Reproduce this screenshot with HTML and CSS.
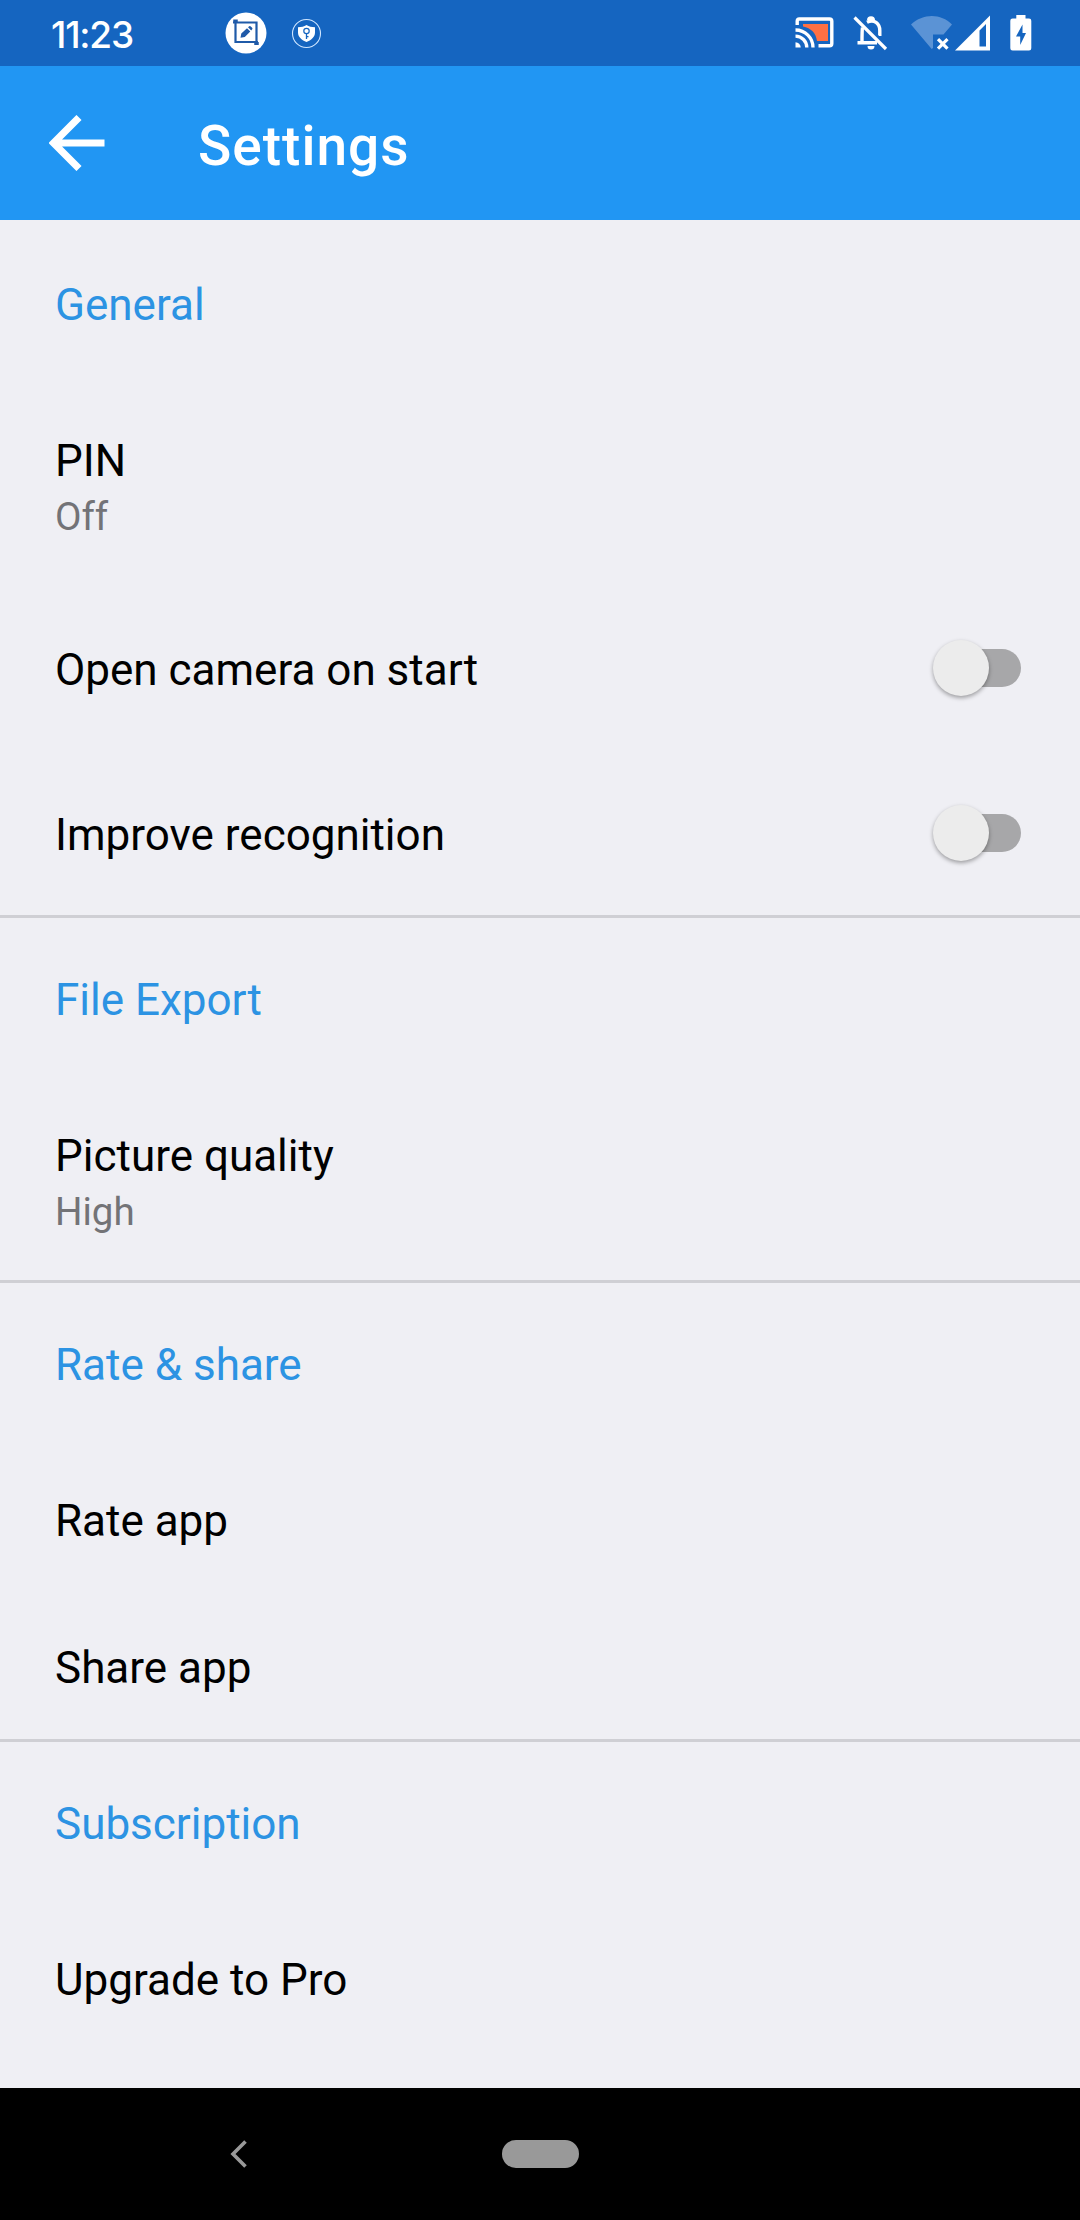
FILE: index.html
```
<!DOCTYPE html>
<html lang="en">
<head>
  <meta charset="UTF-8">
  <meta name="viewport" content="width=device-width, initial-scale=1.0">
  <title>Settings</title>
  <link rel="stylesheet" href="styles.css">
</head>
<body>
  <div class="statusbar">
    <span class="time">11:23</span>
    <svg class="icon-crop" width="42" height="42" viewBox="0 0 42 42">
      <circle cx="21" cy="21" r="20.500" fill="#fff"/>
      <path d="M8 10.500H31.500V31.500M10.500 8V30H33" fill="none" stroke="#1f5aa8" stroke-width="2.200"/>
      <path d="M10.500 7.500V11M31.500 30V33" stroke="#1f5aa8" stroke-width="4.500"/>
      <path d="M15.500 25.800l.8-4.200 5.700-5.300 3.300 3.300-5.500 5.400zM23 15.300l1.200-1.100q.8-.6 1.600.2l1.300 1.300q.8.800.1 1.600L26.200 18.500z" fill="#1f5aa8"/>
    </svg>
    <svg class="icon-shield" width="31" height="31" viewBox="0 0 31 31">
      <circle cx="15.500" cy="15.500" r="14" fill="none" stroke="#cfe6ff" stroke-width="1.100"/>
      <path d="M15.500 7c2.500 1.800 5 2.200 8.500 2.200v5.300c0 4.500-4 7.800-8.500 9.500-4.500-1.700-8.500-5-8.500-9.500V9.200c3.500 0 6-.4 8.500-2.200z" fill="#fff"/>
      <circle cx="15.500" cy="13" r="2.700" fill="none" stroke="#1565c0" stroke-width="1.200"/>
      <path d="M15.500 15.700v5.300M15.500 18.700h2" fill="none" stroke="#1565c0" stroke-width="1.300"/>
    </svg>
    <div class="system">
      <svg class="icon-cast" width="40" height="34" viewBox="0 0 40 34">
        <path d="M8 8H33V25H22C21 17 16 12 8 10.500z" fill="#ff7043"/>
        <path d="M2.200 9V5Q2.200 3 4.200 3H34.500Q36.800 3 36.800 5.300V27.500Q36.800 29.800 34.500 29.800H23.500" fill="none" stroke="#fff" stroke-width="3.400"/>
        <path d="M.5 14A17.500 17.500 0 0 1 18 31.500M.5 20.200A11.300 11.300 0 0 1 11.800 31.500" fill="none" stroke="#fff" stroke-width="3.300"/>
        <path d="M.5 26.300A5.200 5.200 0 0 1 5.700 31.500H.5z" fill="#fff"/>
      </svg>
      <svg class="icon-bell" width="36" height="36" viewBox="0 0 36 36">
        <path d="M15 5.200a3 3 0 0 1 6 0" fill="#fff" stroke="#fff" stroke-width="2"/>
        <path d="M14 7.300C21 3.500 26.800 8.500 26.800 15.500V21M9.500 12.500C9 15 9 18 9 27M4.500 27.700H24" fill="none" stroke="#fff" stroke-width="3.400"/>
        <path d="M14.500 31h7a3.500 3.500 0 0 1-7 0z" fill="#fff"/>
        <path d="M3.500 0.500L35 32" stroke="#1565c0" stroke-width="3"/>
        <path d="M1.500 2.500L33 34" stroke="#fff" stroke-width="3.200"/>
      </svg>
      <svg class="icon-wifi" width="42" height="36" viewBox="0 0 42 36">
        <path d="M20.700 34L0 9.500C12-2 30-2 41 9.500L32.500 19.500H22V33z" fill="#5b93d5"/>
        <path d="M27 24.200l9.500 9.500M36.500 24.200L27 33.700" stroke="#fff" stroke-width="3.200"/>
      </svg>
      <svg class="icon-signal" width="36" height="36" viewBox="0 0 36 36">
        <path fill-rule="evenodd" d="M0 35.500L35 .5V35.500zM24.500 15.500V31.500H31V9z" fill="#fff"/>
      </svg>
      <svg class="icon-battery" width="22" height="36" viewBox="0 0 22 36">
        <path d="M6.300 0H15.500V3.500H19Q21.300 3.500 21.300 5.800V33.200Q21.300 35.500 19 35.500H2.600Q.3 35.500 .3 33.200V5.800Q.3 3.500 2.600 3.500H6.300z" fill="#fff"/>
        <path d="M12.500 9.500L6 21.500h4.200v8.500L16 18h-3.500z" fill="#1565c0"/>
      </svg>
    </div>
  </div>

  <header class="appbar">
    <svg class="back" width="56" height="56" viewBox="0 0 56 56">
      <path d="M55.500 28H6M30 2.500L4.500 28 30 53.500" fill="none" stroke="#fff" stroke-width="7.200"/>
    </svg>
    <h1>Settings</h1>
  </header>

  <main class="settings">
    <section>
      <h2>General</h2>
      <div class="row two-line">
        <div class="title">PIN</div>
        <div class="summary">Off</div>
      </div>
      <div class="row with-switch">
        <div class="title">Open camera on start</div>
        <div class="switch"><span class="knob"></span></div>
      </div>
      <div class="row with-switch">
        <div class="title">Improve recognition</div>
        <div class="switch"><span class="knob"></span></div>
      </div>
    </section>

    <section>
      <h2>File Export</h2>
      <div class="row two-line">
        <div class="title">Picture quality</div>
        <div class="summary">High</div>
      </div>
    </section>

    <section>
      <h2>Rate &amp; share</h2>
      <div class="row"><div class="title">Rate app</div></div>
      <div class="row"><div class="title">Share app</div></div>
    </section>

    <section>
      <h2>Subscription</h2>
      <div class="row"><div class="title">Upgrade to Pro</div></div>
    </section>
  </main>

  <nav class="navbar">
    <svg class="nav-back" width="18" height="28" viewBox="0 0 18 28">
      <path d="M15.500 1.500L3 14l12.500 12.500" fill="none" stroke="#999" stroke-width="3.600"/>
    </svg>
    <div class="home-pill"></div>
  </nav>
</body>
</html>
```
FILE: styles.css
```
* {
  box-sizing: border-box;
}
body {
  margin: 0;
  height: 2220px;
  display: flex;
  flex-direction: column;
  font-family: Roboto, sans-serif;
  background: #efeff4;
  color: #000;
  overflow: hidden;
}
svg {
  display: block;
  flex: none;
}

/* status bar */
.statusbar {
  height: 66px;
  display: flex;
  align-items: center;
  padding-left: 51px;
  padding-right: 48px;
  background: #1565c0;
  color: #fff;
}
.time {
  width: 174px;
  font-family: Inter, sans-serif;
  font-size: 37px;
  font-weight: 500;
  line-height: 44px;
  letter-spacing: -1.2px;
  padding-top: 3px;
}
.icon-crop {
  margin-bottom: 1px;
}
.icon-shield {
  margin-left: 24px;
}
.system {
  margin-left: auto;
  display: flex;
  align-items: center;
}
.icon-bell {
  margin-left: 18px;
}
.icon-wifi {
  margin-left: 22px;
}
.icon-signal {
  margin-left: 2px;
}
.icon-battery {
  margin-left: 19px;
}

/* app bar */
.appbar {
  height: 154px;
  display: flex;
  align-items: center;
  padding-left: 49px;
  background: #2196f3;
  color: #fff;
}
h1 {
  margin: 0 0 0 93px;
  padding-top: 5px;
  font-size: 55px;
  font-weight: 500;
  line-height: 64px;
  letter-spacing: 1px;
}

/* list */
.settings {
  flex: 1;
}
section {
  border-top: 3px solid #cfcfd4;
}
section:first-child {
  border-top-color: transparent;
}
h2 {
  margin: 0;
  height: 162px;
  padding: 56px 55px 0;
  font-size: 44px;
  font-weight: 400;
  line-height: 52px;
  color: #2c93e3;
}
.row {
  height: 147px;
  display: flex;
  align-items: center;
  padding: 5px 55px 0;
}
.title {
  font-size: 44px;
  line-height: 52px;
}
.two-line {
  height: 200px;
  display: block;
  padding-top: 50px;
}
.summary {
  margin-top: 7px;
  font-size: 38.5px;
  line-height: 46px;
  color: #737377;
}
.with-switch {
  height: 165px;
  justify-content: space-between;
}
.switch {
  position: relative;
  width: 83px;
  height: 38px;
  margin-right: 4px;
  margin-bottom: 4px;
  border-radius: 19px;
  background: #a7a7a9;
}
.knob {
  position: absolute;
  left: -5px;
  top: -9px;
  width: 56px;
  height: 56px;
  border-radius: 50%;
  background: #ececec;
  box-shadow: 0 2px 4px rgba(0,0,0,0.35);
}

/* navigation bar */
.navbar {
  height: 132px;
  display: flex;
  align-items: center;
  padding-left: 230px;
  background: #000;
}
.home-pill {
  width: 77px;
  height: 28px;
  margin-left: 254px;
  border-radius: 14px;
  background: #999;
}
```
